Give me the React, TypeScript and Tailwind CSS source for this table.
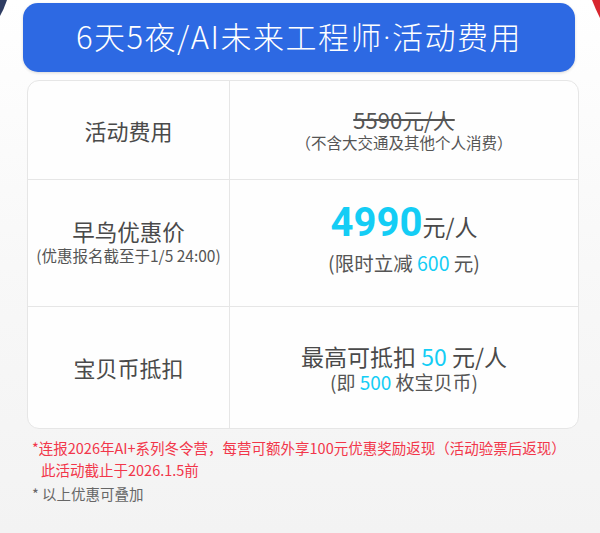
import React from 'react';

const font = { fontFamily: '"Noto Sans CJK SC", "Noto Sans", sans-serif' };
const latin = { fontFamily: 'Roboto, "Noto Sans", sans-serif' };

const rows = [
  {
    id: 'fee',
    height: 'h-[98px]',
    left: <span className="text-[22px] text-[#4a4a4a]">活动费用</span>,
    right: (
      <>
        <span className="text-[22px] leading-[24px] text-[#555] line-through decoration-[1.5px]">5590元/人</span>
        <span className="text-[15.5px] leading-[22px] text-[#555]">（不含大交通及其他个人消费）</span>
      </>
    ),
  },
  {
    id: 'early',
    height: 'h-[127px]',
    left: (
      <div className="flex flex-col items-center pb-[5px]">
        <span className="text-[22.5px] leading-[28px] text-[#4a4a4a]">早鸟优惠价</span>
        <span className="text-[15.5px] leading-[20px] text-[#555]">(优惠报名截至于1/5 24:00)</span>
      </div>
    ),
    right: (
      <div className="flex flex-col items-center pb-[8px]">
        <span className="leading-[42px] text-[#4a4a4a]">
          <span style={latin} className="text-[40px] font-bold text-[#14cdf5]">4990</span>
          <span className="text-[23px]">元/人</span>
        </span>
        <span className="text-[19.5px] leading-[26px] text-[#555]">
          (限时立减 <span className="text-[#14cdf5]">600</span> 元)
        </span>
      </div>
    ),
  },
  {
    id: 'coin',
    height: 'h-[122px]',
    left: <span className="text-[22px] text-[#4a4a4a]">宝贝币抵扣</span>,
    right: (
      <>
        <span className="text-[23px] leading-[28px] text-[#4a4a4a]">
          最高可抵扣 <span className="text-[#14cdf5]">50</span> 元/人
        </span>
        <span className="text-[19px] leading-[24px] text-[#555]">
          (即 <span className="text-[#14cdf5]">500</span> 枚宝贝币)
        </span>
      </>
    ),
  },
];

export default function App() {
  return (
    <div
      style={font}
      className="relative w-[600px] h-[533px] overflow-hidden bg-gradient-to-b from-white via-[#f8f8f8] to-[#f3f3f3]"
    >
      {/* decorative corners peeking in from the page behind */}
      <svg className="absolute left-0 top-0" width="12" height="20" viewBox="0 0 12 20">
        <path d="M0 0 L7 0 Q4 9 0 16 Z" fill="#2f3d63" />
      </svg>
      <svg className="absolute right-0 top-0" width="12" height="20" viewBox="0 0 12 20">
        <path d="M4 0 L12 0 L12 18 Q7 8 4 0 Z" fill="#d8262f" />
      </svg>

      <div className="pt-[3px] pl-[23px]">
        <div className="w-[552px] h-[69px] rounded-[15px] bg-[#2d69e3] flex items-center justify-center shadow-[0_1px_3px_rgba(0,0,0,0.15)]">
          <span className="text-white text-[31px] font-light tracking-[1.5px]">
            6天5夜/AI未来工程师<span style={latin}>·</span>活动费用
          </span>
        </div>
      </div>

      <div className="mt-[8px] ml-[27px] w-[552px] rounded-[12px] border border-[#e6e6e6] bg-[#fefefe] overflow-hidden">
        {rows.map((row, i) => (
          <div
            key={row.id}
            className={`grid grid-cols-[202px_1fr] ${row.height} ${i > 0 ? 'border-t border-[#e6e6e6]' : ''}`}
          >
            <div className="flex flex-col items-center justify-center border-r border-[#e6e6e6]">{row.left}</div>
            <div className="flex flex-col items-center justify-center">{row.right}</div>
          </div>
        ))}
      </div>

      <div className="pl-[32px] pt-[8px] text-[14.5px]">
        <p className="text-[#f2364a] leading-[22px]">*连报2026年AI+系列冬令营，每营可额外享100元优惠奖励返现（活动验票后返现）</p>
        <p className="text-[#f2364a] leading-[22px] pl-[9px]">此活动截止于2026.1.5前</p>
        <p className="text-[#666] leading-[22px] mt-[2px]">* 以上优惠可叠加</p>
      </div>
    </div>
  );
}
